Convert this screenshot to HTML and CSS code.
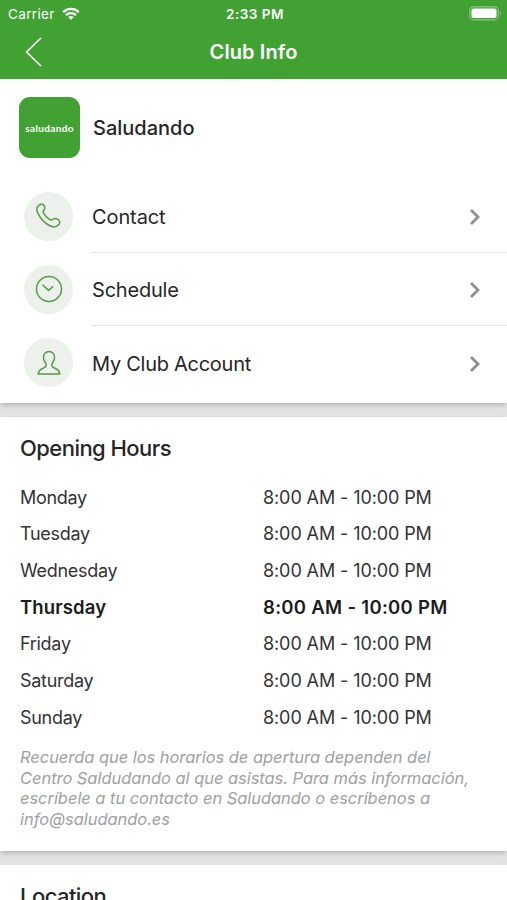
FILE: index.html
```
<!DOCTYPE html>
<html lang="en">
<head>
    <meta charset="UTF-8">
    <meta name="viewport" content="width=device-width, initial-scale=1.0">
    <title>Club Info</title>
    <link rel="stylesheet" href="styles.css">
</head>
<body>
    <header class="header">
        <div class="status-bar">
            <div class="carrier">
                <span>Carrier</span>
                <svg class="wifi" width="18" height="14" viewBox="0 0 18 14" fill="none" stroke="#fff" stroke-width="2.2">
                    <path d="M1.2 5.1C5.5.9 12.5.9 16.8 5.1"/>
                    <path d="M4 8.1c2.8-2.7 7.2-2.7 10 0"/>
                    <path d="M6.3 10.1c1.5-1.4 3.9-1.4 5.4 0L9 12.9z" fill="#fff" stroke="none"/>
                </svg>
            </div>
            <span class="clock">2:33 PM</span>
            <svg class="battery" width="33" height="15" viewBox="0 0 33 15">
                <rect x=".8" y=".8" width="28.4" height="13" rx="3.8" fill="none" stroke="#8cc783" stroke-width="1.2"/>
                <rect x="2.5" y="2.6" width="25" height="9.4" rx="2" fill="#fff"/>
                <path d="M30.6 5c1.6.7 1.6 3.9 0 4.6z" fill="#8cc783"/>
            </svg>
        </div>
        <nav class="nav-bar">
            <svg class="back" width="18" height="32" viewBox="0 0 18 32" fill="none" stroke="#fff" stroke-width="1.6">
                <path d="M17 2L2.600 16L17 30"/>
            </svg>
            <h1>Club Info</h1>
        </nav>
    </header>

    <section class="card club">
        <div class="club-head">
            <div class="logo"><span>saludando</span></div>
            <h2>Saludando</h2>
        </div>
        <ul class="menu">
            <li>
                <span class="icon">
                    <svg width="28" height="28" viewBox="0 0 28 28">
                        <path d="M4 3c2.200-1.600 4.900-.8 5.600 1.700.4 1.500.1 2.500-.7 3.500-.9 1.100-.8 2.100-.2 3.100 1.600 2.800 3.500 4.700 6.200 6.400 1 .6 2 .5 2.900-.2 1.500-1.100 3.100-1.300 4.700-.4 2.300 1.300 2.900 3.900 1.100 5.700-2.300 2.500-6.400 2.500-10.200.2C9.400 20.700 5.700 16.600 3.200 11.900 1.400 8.500 1.500 4.900 4 3z"/>
                    </svg>
                </span>
                <div class="item"><span>Contact</span>
                    <svg class="chevron" width="12" height="18" viewBox="0 0 12 18"><path d="M2 2l7 7-7 7"/></svg>
                </div>
            </li>
            <li>
                <span class="icon">
                    <svg width="28" height="28" viewBox="0 0 28 28">
                        <circle cx="14" cy="14" r="12.5"/>
                        <path d="M7.500 9.800l6 5.600 4.700-4.100"/>
                    </svg>
                </span>
                <div class="item schedule"><span>Schedule</span>
                    <svg class="chevron" width="12" height="18" viewBox="0 0 12 18"><path d="M2 2l7 7-7 7"/></svg>
                </div>
            </li>
            <li>
                <span class="icon">
                    <svg width="28" height="28" viewBox="0 0 28 28">
                        <path d="M14 2.600c-3.700 0-5.700 2.700-5.500 6.100.1 2.400.9 4.100 2 5.300.9 1 .9 3.200-.4 4.200-2 1.500-6.800 1.900-6.900 6.900h21.600c-.1-5-4.900-5.400-6.900-6.900-1.300-1-1.300-3.200-.4-4.200 1.100-1.200 1.900-2.900 2-5.300.2-3.400-1.800-6.100-5.500-6.100z"/>
                    </svg>
                </span>
                <div class="item account"><span>My Club Account</span>
                    <svg class="chevron" width="12" height="18" viewBox="0 0 12 18"><path d="M2 2l7 7-7 7"/></svg>
                </div>
            </li>
        </ul>
    </section>

    <section class="card hours">
        <h3>Opening Hours</h3>
        <table>
            <tbody>
                <tr><td>Monday</td><td>8:00 AM - 10:00 PM</td></tr>
                <tr><td>Tuesday</td><td>8:00 AM - 10:00 PM</td></tr>
                <tr><td>Wednesday</td><td>8:00 AM - 10:00 PM</td></tr>
                <tr class="today"><td>Thursday</td><td>8:00 AM - 10:00 PM</td></tr>
                <tr><td>Friday</td><td>8:00 AM - 10:00 PM</td></tr>
                <tr><td>Saturday</td><td>8:00 AM - 10:00 PM</td></tr>
                <tr><td>Sunday</td><td>8:00 AM - 10:00 PM</td></tr>
            </tbody>
        </table>
        <p class="note" lang="es">Recuerda que los horarios de apertura dependen del<br>Centro Saldudando al que asistas. Para más información,<br>escríbele a tu contacto en Saludando o escríbenos a<br>info@saludando.es</p>
    </section>

    <section class="card location">
        <h3>Location</h3>
    </section>
</body>
</html>
```
FILE: styles.css
```
* {
    box-sizing: border-box;
}
body {
    font-family: Inter, Roboto, "Liberation Sans", sans-serif;
    margin: 0;
    height: 900px;
    overflow: hidden;
    background-color: #e2e2e2;
    color: #262626;
}
h1, h2, h3, p, ul {
    margin: 0;
    padding: 0;
}

/* header */
.header {
    height: 79px;
    background-color: #41a233;
    color: #fff;
}
.status-bar {
    display: grid;
    grid-template-columns: 1fr auto 1fr;
    align-items: center;
    height: 27px;
    padding: 0 5px 0 8px;
    font-size: 13.5px;
}
.carrier {
    display: flex;
    align-items: center;
    gap: 7px;
    letter-spacing: 0.35px;
}
.clock {
    font-weight: 600;
    font-size: 13.5px;
    letter-spacing: 0.5px;
}
.battery {
    justify-self: end;
}
.nav-bar {
    display: grid;
    grid-template-columns: 1fr auto 1fr;
    align-items: center;
    height: 50px;
    padding: 0 24px;
}
h1 {
    font-size: 20px;
    font-weight: 600;
    letter-spacing: 0.1px;
}

/* cards */
.card {
    background-color: #fff;
    margin-bottom: 14px;
}
.club, .hours {
    box-shadow: 0 3px 5px -1px rgba(0, 0, 0, 0.2);
}
h3 {
    font-size: 22px;
    font-weight: 500;
    line-height: 28px;
    letter-spacing: -0.55px;
}

/* club */
.club {
    height: 324px;
    padding-top: 18px;
}
.club-head {
    display: flex;
    align-items: center;
    gap: 13px;
    padding-left: 19px;
}
.logo {
    display: flex;
    align-items: center;
    justify-content: center;
    width: 61px;
    height: 61px;
    border-radius: 11px;
    background-color: #41a233;
    color: #fff;
    font-family: Lato, sans-serif;
    font-size: 10px;
    font-weight: 700;
    letter-spacing: 0.35px;
}
h2 {
    padding-top: 1px;
    font-size: 20px;
    font-weight: 500;
}
.menu {
    list-style: none;
    padding-top: 21.5px;
}
.menu li {
    display: flex;
    align-items: center;
    gap: 19px;
    height: 73.3px;
    padding-left: 24px;
}
.icon {
    display: flex;
    align-items: center;
    justify-content: center;
    width: 49px;
    height: 49px;
    border-radius: 50%;
    background-color: #ecf1eb;
}
.icon svg {
    fill: none;
    stroke: #579a4b;
    stroke-width: 1.5;
    stroke-linejoin: round;
}
.item {
    flex: 1;
    display: flex;
    align-items: center;
    justify-content: space-between;
    height: 100%;
    padding: 2px 26px 0 0;
    border-bottom: 1.5px solid #e5e5e5;
    font-size: 20px;
    letter-spacing: -0.1px;
}
.schedule {
    letter-spacing: -0.2px;
}
.account {
    letter-spacing: -0.27px;
}
.menu li:last-child .item {
    border-bottom: none;
}
.chevron {
    fill: none;
    stroke: #8e8e8e;
    stroke-width: 2.8;
}

/* opening hours */
.hours {
    height: 434px;
    padding: 17px 20px 0;
}
table {
    width: 100%;
    margin-top: 17px;
    border-collapse: collapse;
    table-layout: fixed;
}
td {
    height: 36.65px;
    padding: 0;
    font-size: 18px;
    letter-spacing: -0.1px;
    color: #333;
}
td:first-child {
    width: 243px;
    letter-spacing: -0.3px;
}
.today td {
    font-size: 18.5px;
    font-weight: 600;
    letter-spacing: 0.3px;
    color: #1c1c1c;
}
.today td:first-child {
    letter-spacing: 0.15px;
}
.note {
    margin-top: 12px;
    font-size: 16.5px;
    font-style: italic;
    line-height: 20.4px;
    letter-spacing: -0.05px;
    color: #a0a0a0;
    white-space: nowrap;
}

/* location */
.location {
    height: 35px;
    margin-bottom: 0;
    padding: 17px 20px 0;
}
```
